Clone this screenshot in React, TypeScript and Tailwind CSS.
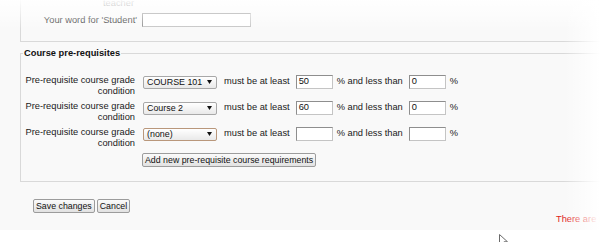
import type { ReactNode } from "react";

const rows = [
  { course: "COURSE 101", min: "50", max: "0", focus: false },
  { course: "Course 2", min: "60", max: "0", focus: false },
  { course: "(none)", min: "", max: "", focus: true },
];

function Select({ value, focus }: { value: string; focus?: boolean }) {
  return (
    <div
      className={`flex h-[13px] w-[74px] items-center justify-between rounded-[2px] border bg-linear-to-b from-white to-[#e9e9e9] pl-[3px] pr-[4px] text-[8.9px] leading-none text-[#111] ${
        focus ? "border-[#b9977b]" : "border-[#a8a8a8]"
      }`}
    >
      <span>{value}</span>
      <svg width="5" height="4" viewBox="0 0 5 4">
        <polygon points="0,0 5,0 2.5,4" fill="#111" />
      </svg>
    </div>
  );
}

function Field({ value, w = "w-[37px]" }: { value?: string; w?: string }) {
  return (
    <div
      className={`flex h-[14px] ${w} items-center border border-[#c4c4c4] border-l-[#8e8e8e] border-t-[#8e8e8e] bg-white pl-[2px] text-[9.3px] leading-none text-[#111]`}
    >
      {value}
    </div>
  );
}

function Button({ children }: { children: ReactNode }) {
  return (
    <div className="flex h-[14px] items-center rounded-[2px] border border-[#9c9c9c] bg-linear-to-b from-[#fbfbfb] to-[#e2e2e2] px-[2px] text-[8.8px] leading-none text-[#111]">
      {children}
    </div>
  );
}

export default function App() {
  return (
    <div className="relative h-[242px] w-[600px] overflow-hidden bg-white font-['Liberation_Sans',Arial,sans-serif] text-[9.3px] text-[#1a1a1a]">
      <div className="h-[232px] bg-[#f9f9f9] pl-[20px]">
        {/* previous section, mostly scrolled away */}
        <div className="-mt-[2px] w-[640px] border-b border-l border-[#d9d9d9] pb-[14px]">
          <div className="pl-[82px] leading-[11px] text-[#444]">teacher</div>
          <div className="mt-[4px] flex items-center">
            <div className="w-[116px] text-right leading-[11px] text-[#333]">Your word for 'Student'</div>
            <div className="ml-[5px]">
              <Field w="w-[109px]" />
            </div>
          </div>
        </div>

        <fieldset className="mt-[6px] w-[640px] border border-[#d9d9d9] pb-[14px] pt-[16px]">
          <legend className="ml-[2px] px-[1px] font-bold leading-[11px] text-[#111]">Course pre-requisites</legend>

          <div className="flex flex-col gap-[4px]">
            {rows.map((r, i) => (
              <div key={i} className="flex items-start">
                <div className="w-[114px] text-right leading-[11px] text-[#1a1a1a]">
                  Pre-requisite course grade
                  <br />
                  condition
                </div>
                <div className="ml-[8px] flex h-[14px] items-center">
                  <Select value={r.course} focus={r.focus} />
                  <span className="ml-[7px] mr-[6px] leading-none">must be at least</span>
                  <Field value={r.min} />
                  <span className="ml-[4px] mr-[6px] leading-none">% and less than</span>
                  <Field value={r.max} />
                  <span className="ml-[4px] leading-none">%</span>
                </div>
              </div>
            ))}
          </div>

          <div className="ml-[121px] mt-[4px] flex">
            <Button>Add new pre-requisite course requirements</Button>
          </div>
        </fieldset>

        <div className="ml-[13px] mt-[17px] flex gap-[2px]">
          <Button>Save changes</Button>
          <Button>Cancel</Button>
        </div>
        <div className="mt-[1px] whitespace-nowrap pl-[536px] leading-[11px] text-[#e0241b]">
          There are required fields in this form marked *.
        </div>
      </div>

      {/* mouse pointer */}
      <svg className="absolute left-[499px] top-[234px]" width="10" height="14" viewBox="0 0 10 14">
        <path d="M0.5 0.5 L0.5 11 L3 8.6 L5 13 L7 12 L5 7.8 L8.5 7.8 Z" fill="#fff" stroke="#6a6a6a" strokeWidth="1" />
      </svg>

      {/* screenshot fade edges */}
      <div className="pointer-events-none absolute inset-x-0 top-0 h-[30px] bg-linear-to-b from-white/95 to-white/0" />
      <div className="pointer-events-none absolute inset-y-0 right-0 w-[36px] bg-linear-to-r from-white/0 to-white" />
    </div>
  );
}
